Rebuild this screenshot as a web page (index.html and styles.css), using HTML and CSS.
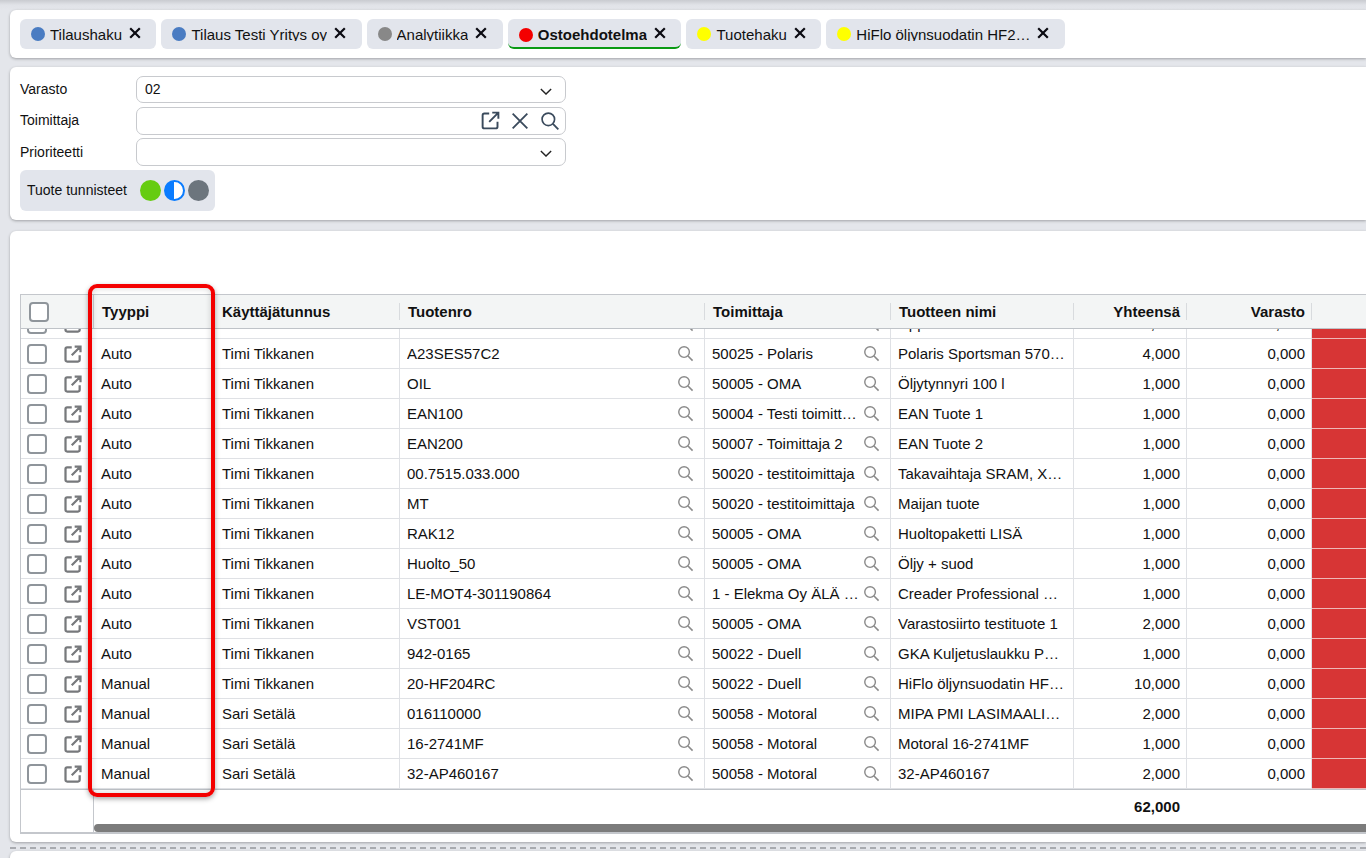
FILE: index.html
```html
<!DOCTYPE html>
<html lang="fi">
<head>
<meta charset="utf-8">
<title>Ostoehdotelma</title>
<link rel="stylesheet" href="styles.css">
</head>
<body>
<svg class="defs" width="0" height="0" aria-hidden="true">
  <symbol id="i-open" viewBox="0 0 24 24"><path d="M10.5 4H5a2 2 0 0 0-2 2v13a2 2 0 0 0 2 2h13a2 2 0 0 0 2-2v-5.5M10.5 13.5 21 3M14 3h7v7" fill="none" stroke="currentColor"/></symbol>
  <symbol id="i-search" viewBox="0 0 24 24"><circle cx="10" cy="10" r="7.5" fill="none" stroke="currentColor" stroke-width="2"/><path d="M15.5 15.5 22 22" fill="none" stroke="currentColor" stroke-width="2.2"/></symbol>
  <symbol id="i-x" viewBox="0 0 24 24"><path d="M4 4 20 20M20 4 4 20" fill="none" stroke="currentColor" stroke-width="2"/></symbol>
  <symbol id="i-close" viewBox="0 0 12 12"><path d="M1.2 1.2 10.8 10.8M10.8 1.2 1.2 10.8" fill="none" stroke="currentColor" stroke-width="2.2"/></symbol>
  <symbol id="i-chev" viewBox="0 0 14 8"><path d="M1 1 7 7 13 1" fill="none" stroke="currentColor" stroke-width="1.6"/></symbol>
</svg>

<section class="panel tabs">
  <div class="tab"><span class="dot dot-blue"></span><span class="tab-text">Tilaushaku</span><svg class="tab-x"><use href="#i-close"/></svg></div>
  <div class="tab"><span class="dot dot-blue"></span><span class="tab-text">Tilaus Testi Yritys oy</span><svg class="tab-x"><use href="#i-close"/></svg></div>
  <div class="tab"><span class="dot dot-gray"></span><span class="tab-text">Analytiikka</span><svg class="tab-x"><use href="#i-close"/></svg></div>
  <div class="tab tab-active"><span class="dot dot-red"></span><span class="tab-text">Ostoehdotelma</span><svg class="tab-x"><use href="#i-close"/></svg></div>
  <div class="tab"><span class="dot dot-yellow"></span><span class="tab-text">Tuotehaku</span><svg class="tab-x"><use href="#i-close"/></svg></div>
  <div class="tab"><span class="dot dot-yellow"></span><span class="tab-text tab-text-long">HiFlo öljynsuodatin HF2…</span><svg class="tab-x"><use href="#i-close"/></svg></div>
</section>

<section class="panel filters">
  <div class="form">
    <label class="lbl lbl-1">Varasto</label>
    <div class="field field-1"><span>02</span><svg class="chev"><use href="#i-chev"/></svg></div>
    <label class="lbl lbl-2">Toimittaja</label>
    <div class="field field-2"><svg class="fi fi-open"><use href="#i-open"/></svg><svg class="fi fi-x"><use href="#i-x"/></svg><svg class="fi fi-search"><use href="#i-search"/></svg></div>
    <label class="lbl lbl-3">Prioriteetti</label>
    <div class="field field-3"><svg class="chev"><use href="#i-chev"/></svg></div>
  </div>
  <div class="tags">
    <span class="tags-label">Tuote tunnisteet</span>
    <span class="tag tag-green"></span><span class="tag tag-half"></span><span class="tag tag-gray"></span>
  </div>
</section>

<section class="panel grid-panel">
  <div class="table">
    <div class="row head">
      <div class="c-sel"><span class="cb cb-head"></span></div>
      <div class="hc hc-first">Tyyppi</div>
      <div class="hc">Käyttäjätunnus</div>
      <div class="hc">Tuotenro</div>
      <div class="hc">Toimittaja</div>
      <div class="hc">Tuotteen nimi</div>
      <div class="hc num">Yhteensä</div>
      <div class="hc num">Varasto</div>
      <div></div>
    </div>
    <div class="rows">
      <div class="rows-inner">
        <div class="row"><div class="c-sel"><span class="cb"></span><svg class="open"><use href="#i-open"/></svg></div><div class="c c-plain">Auto</div><div class="c c-user">Timi Tikkanen</div><div class="c c-s"><span class="t">HUOLTO</span><svg class="s"><use href="#i-search"/></svg></div><div class="c c-s"><span class="t">50005 - OMA</span><svg class="s"><use href="#i-search"/></svg></div><div class="c c-n"><span class="t">Uppo</span></div><div class="c num">1,000</div><div class="c num">0,000</div><div class="red"></div></div>
        <div class="row"><div class="c-sel"><span class="cb"></span><svg class="open"><use href="#i-open"/></svg></div><div class="c c-plain">Auto</div><div class="c c-user">Timi Tikkanen</div><div class="c c-s"><span class="t">A23SES57C2</span><svg class="s"><use href="#i-search"/></svg></div><div class="c c-s"><span class="t">50025 - Polaris</span><svg class="s"><use href="#i-search"/></svg></div><div class="c c-n"><span class="t">Polaris Sportsman 570…</span></div><div class="c num">4,000</div><div class="c num">0,000</div><div class="red"></div></div>
        <div class="row"><div class="c-sel"><span class="cb"></span><svg class="open"><use href="#i-open"/></svg></div><div class="c c-plain">Auto</div><div class="c c-user">Timi Tikkanen</div><div class="c c-s"><span class="t">OIL</span><svg class="s"><use href="#i-search"/></svg></div><div class="c c-s"><span class="t">50005 - OMA</span><svg class="s"><use href="#i-search"/></svg></div><div class="c c-n"><span class="t">Öljytynnyri 100 l</span></div><div class="c num">1,000</div><div class="c num">0,000</div><div class="red"></div></div>
        <div class="row"><div class="c-sel"><span class="cb"></span><svg class="open"><use href="#i-open"/></svg></div><div class="c c-plain">Auto</div><div class="c c-user">Timi Tikkanen</div><div class="c c-s"><span class="t">EAN100</span><svg class="s"><use href="#i-search"/></svg></div><div class="c c-s"><span class="t">50004 - Testi toimitt…</span><svg class="s"><use href="#i-search"/></svg></div><div class="c c-n"><span class="t">EAN Tuote 1</span></div><div class="c num">1,000</div><div class="c num">0,000</div><div class="red"></div></div>
        <div class="row"><div class="c-sel"><span class="cb"></span><svg class="open"><use href="#i-open"/></svg></div><div class="c c-plain">Auto</div><div class="c c-user">Timi Tikkanen</div><div class="c c-s"><span class="t">EAN200</span><svg class="s"><use href="#i-search"/></svg></div><div class="c c-s"><span class="t">50007 - Toimittaja 2</span><svg class="s"><use href="#i-search"/></svg></div><div class="c c-n"><span class="t">EAN Tuote 2</span></div><div class="c num">1,000</div><div class="c num">0,000</div><div class="red"></div></div>
        <div class="row"><div class="c-sel"><span class="cb"></span><svg class="open"><use href="#i-open"/></svg></div><div class="c c-plain">Auto</div><div class="c c-user">Timi Tikkanen</div><div class="c c-s"><span class="t">00.7515.033.000</span><svg class="s"><use href="#i-search"/></svg></div><div class="c c-s"><span class="t">50020 - testitoimittaja</span><svg class="s"><use href="#i-search"/></svg></div><div class="c c-n"><span class="t">Takavaihtaja SRAM, X…</span></div><div class="c num">1,000</div><div class="c num">0,000</div><div class="red"></div></div>
        <div class="row"><div class="c-sel"><span class="cb"></span><svg class="open"><use href="#i-open"/></svg></div><div class="c c-plain">Auto</div><div class="c c-user">Timi Tikkanen</div><div class="c c-s"><span class="t">MT</span><svg class="s"><use href="#i-search"/></svg></div><div class="c c-s"><span class="t">50020 - testitoimittaja</span><svg class="s"><use href="#i-search"/></svg></div><div class="c c-n"><span class="t">Maijan tuote</span></div><div class="c num">1,000</div><div class="c num">0,000</div><div class="red"></div></div>
        <div class="row"><div class="c-sel"><span class="cb"></span><svg class="open"><use href="#i-open"/></svg></div><div class="c c-plain">Auto</div><div class="c c-user">Timi Tikkanen</div><div class="c c-s"><span class="t">RAK12</span><svg class="s"><use href="#i-search"/></svg></div><div class="c c-s"><span class="t">50005 - OMA</span><svg class="s"><use href="#i-search"/></svg></div><div class="c c-n"><span class="t">Huoltopaketti LISÄ</span></div><div class="c num">1,000</div><div class="c num">0,000</div><div class="red"></div></div>
        <div class="row"><div class="c-sel"><span class="cb"></span><svg class="open"><use href="#i-open"/></svg></div><div class="c c-plain">Auto</div><div class="c c-user">Timi Tikkanen</div><div class="c c-s"><span class="t">Huolto_50</span><svg class="s"><use href="#i-search"/></svg></div><div class="c c-s"><span class="t">50005 - OMA</span><svg class="s"><use href="#i-search"/></svg></div><div class="c c-n"><span class="t">Öljy + suod</span></div><div class="c num">1,000</div><div class="c num">0,000</div><div class="red"></div></div>
        <div class="row"><div class="c-sel"><span class="cb"></span><svg class="open"><use href="#i-open"/></svg></div><div class="c c-plain">Auto</div><div class="c c-user">Timi Tikkanen</div><div class="c c-s"><span class="t">LE-MOT4-301190864</span><svg class="s"><use href="#i-search"/></svg></div><div class="c c-s"><span class="t">1 - Elekma Oy ÄLÄ …</span><svg class="s"><use href="#i-search"/></svg></div><div class="c c-n"><span class="t">Creader Professional …</span></div><div class="c num">1,000</div><div class="c num">0,000</div><div class="red"></div></div>
        <div class="row"><div class="c-sel"><span class="cb"></span><svg class="open"><use href="#i-open"/></svg></div><div class="c c-plain">Auto</div><div class="c c-user">Timi Tikkanen</div><div class="c c-s"><span class="t">VST001</span><svg class="s"><use href="#i-search"/></svg></div><div class="c c-s"><span class="t">50005 - OMA</span><svg class="s"><use href="#i-search"/></svg></div><div class="c c-n"><span class="t">Varastosiirto testituote 1</span></div><div class="c num">2,000</div><div class="c num">0,000</div><div class="red"></div></div>
        <div class="row"><div class="c-sel"><span class="cb"></span><svg class="open"><use href="#i-open"/></svg></div><div class="c c-plain">Auto</div><div class="c c-user">Timi Tikkanen</div><div class="c c-s"><span class="t">942-0165</span><svg class="s"><use href="#i-search"/></svg></div><div class="c c-s"><span class="t">50022 - Duell</span><svg class="s"><use href="#i-search"/></svg></div><div class="c c-n"><span class="t">GKA Kuljetuslaukku P…</span></div><div class="c num">1,000</div><div class="c num">0,000</div><div class="red"></div></div>
        <div class="row"><div class="c-sel"><span class="cb"></span><svg class="open"><use href="#i-open"/></svg></div><div class="c c-plain">Manual</div><div class="c c-user">Timi Tikkanen</div><div class="c c-s"><span class="t">20-HF204RC</span><svg class="s"><use href="#i-search"/></svg></div><div class="c c-s"><span class="t">50022 - Duell</span><svg class="s"><use href="#i-search"/></svg></div><div class="c c-n"><span class="t">HiFlo öljynsuodatin HF…</span></div><div class="c num">10,000</div><div class="c num">0,000</div><div class="red"></div></div>
        <div class="row"><div class="c-sel"><span class="cb"></span><svg class="open"><use href="#i-open"/></svg></div><div class="c c-plain">Manual</div><div class="c c-user">Sari Setälä</div><div class="c c-s"><span class="t">016110000</span><svg class="s"><use href="#i-search"/></svg></div><div class="c c-s"><span class="t">50058 - Motoral</span><svg class="s"><use href="#i-search"/></svg></div><div class="c c-n"><span class="t">MIPA PMI LASIMAALI…</span></div><div class="c num">2,000</div><div class="c num">0,000</div><div class="red"></div></div>
        <div class="row"><div class="c-sel"><span class="cb"></span><svg class="open"><use href="#i-open"/></svg></div><div class="c c-plain">Manual</div><div class="c c-user">Sari Setälä</div><div class="c c-s"><span class="t">16-2741MF</span><svg class="s"><use href="#i-search"/></svg></div><div class="c c-s"><span class="t">50058 - Motoral</span><svg class="s"><use href="#i-search"/></svg></div><div class="c c-n"><span class="t">Motoral 16-2741MF</span></div><div class="c num">1,000</div><div class="c num">0,000</div><div class="red"></div></div>
        <div class="row"><div class="c-sel"><span class="cb"></span><svg class="open"><use href="#i-open"/></svg></div><div class="c c-plain">Manual</div><div class="c c-user">Sari Setälä</div><div class="c c-s"><span class="t">32-AP460167</span><svg class="s"><use href="#i-search"/></svg></div><div class="c c-s"><span class="t">50058 - Motoral</span><svg class="s"><use href="#i-search"/></svg></div><div class="c c-n"><span class="t">32-AP460167</span></div><div class="c num">2,000</div><div class="c num">0,000</div><div class="red"></div></div>
      </div>
    </div>
    <div class="foot">
      <div class="foot-left"></div>
      <div class="foot-main">
        <div class="totals"><div class="total">62,000</div></div>
        <div class="scrollbar"></div>
      </div>
    </div>
  </div>
  <div class="highlight"></div>
</section>

<div class="divider"></div>
<section class="panel next"></section>
</body>
</html>
```

FILE: styles.css
```css
* { box-sizing: border-box; }
html, body { margin: 0; height: 858px; overflow: hidden; }
body {
  background: linear-gradient(#c9cbd0 0, #e1e3e8 5px, #e4e6eb 10px);
  font-family: "Liberation Sans", Arial, sans-serif;
  font-size: 14px;
  color: #111;
  padding: 10px 0 0 10px;
}
.defs { position: absolute; }

.panel {
  background: #fff;
  border-radius: 6px 0 0 6px;
  box-shadow: 0 1px 3px rgba(0, 0, 0, .3);
}

/* tabs */
.tabs { height: 48px; padding: 9px 10px; display: flex; gap: 5px; margin-bottom: 9px; font-size: 15px; }
.tab {
  height: 30px;
  background: #e2e5ec;
  border-radius: 6px;
  display: flex;
  align-items: center;
  padding: 0 15.5px 0 11px;
  flex: none;
}
.tab-active { border-bottom: 2px solid #0a9a14; font-weight: 700; }
.dot { width: 14px; height: 14px; border-radius: 50%; margin-right: 5px; flex: none; }
.tab-active .dot { position: relative; top: 2px; }
.dot-blue { background: #4a7cc2; }
.dot-gray { background: #888; }
.dot-red { background: #f40000; }
.dot-yellow { background: #ffff00; }
.tab-text {
  height: 14px;
  line-height: 16px;
  overflow: hidden;
  white-space: nowrap;
}
.tab-active .tab-text { margin-top: 2px; }
.tab-text-long { width: 174px; }
.tab-x { width: 12px; height: 12px; margin-left: 7px; color: #0b0b12; flex: none; position: relative; top: -1px; }
.tab-active .tab-x { top: 0; }

/* filters */
.filters { height: 153px; padding: 9px 10px; margin-bottom: 11px; }
.form {
  display: grid;
  grid-template-columns: 116px 430px;
  grid-template-rows: 27px 28px 28px;
  row-gap: 3.5px;
  align-items: center;
}
.lbl-1 { margin-bottom: 2px; }
.lbl-2 { margin-bottom: 2px; }
.field {
  height: 100%;
  border: 1px solid #c8cace;
  border-radius: 7px;
  display: flex;
  align-items: center;
  justify-content: flex-end;
  padding: 0 4px 0 8px;
}
.field span { margin-right: auto; margin-bottom: 2px; }
.chev { width: 12px; height: 7px; margin-right: 9px; margin-top: 3px; color: #222; }
.fi { color: #3a4a5c; }
.fi-open { width: 21px; height: 21px; margin-right: 8px; stroke-width: 2.2; }
.fi-x { width: 22px; height: 22px; margin-right: 9px; }
.fi-search { width: 20px; height: 20px; margin-right: 1px; }

.tags {
  margin-top: 4px;
  width: 195px;
  height: 41px;
  background: #e2e5ec;
  border-radius: 6px;
  display: flex;
  align-items: center;
  padding-left: 7px;
  gap: 3px;
}
.tags-label { margin-right: 10px; margin-bottom: 2px; }
.tag { width: 21px; height: 21px; border-radius: 50%; flex: none; }
.tag-green { background: #66cc11; }
.tag-half { border: 2px solid #0a7cff; background: linear-gradient(90deg, #0a7cff 50%, #fff 50%); }
.tag-gray { background: #6c757d; }

/* grid */
.grid-panel { height: 611px; padding: 63px 0 0 10px; position: relative; overflow: hidden; font-size: 15px; }
.table { border: 1px solid #c4c7cc; border-right: 0; height: 540px; display: flex; flex-direction: column; }
.row {
  display: grid;
  grid-template-columns: 73px 120px 186px 305px 186px 183px 113px 125px 60px;
  height: 30px;
  align-items: stretch;
}
.head { height: 34px; background: #f3f5f5; border-bottom: 1px solid #bfc3c8; flex: none; }
.c-sel { border-bottom: 1px solid #dfe1e5; display: flex; align-items: center; padding-left: 6px; gap: 16px; }
.head .c-sel { border-bottom: 0; padding-left: 8px; border-right: 1px solid #c8cbcf; }
.cb { width: 20px; height: 20px; border: 2px solid #8f959b; border-radius: 4px; background: #fff; flex: none; }
.open { width: 20px; height: 20px; color: #77797c; flex: none; stroke-width: 2.7; }
.hc {
  display: flex;
  align-items: center;
  padding: 0 7px 0 8px;
  font-weight: 700;
  position: relative;
}
.hc::after {
  content: "";
  position: absolute;
  right: 0;
  top: 8px;
  bottom: 8px;
  width: 1px;
  background: #d8dbde;
}
.hc.num { justify-content: flex-end; }
.rows { height: 460px; overflow: hidden; flex: none; }
.rows-inner { margin-top: -20px; }
.c {
  display: flex;
  align-items: center;
  padding: 0 6px 0 7px;
  border-right: 1px solid #dfe1e5;
  border-bottom: 1px solid #dfe1e5;
  min-width: 0;
  white-space: nowrap;
}
.c-plain { border-right-color: transparent; }
.c-user { padding-left: 8px; }
.c-s { padding-right: 10px; }
.c-n { padding-right: 6px; }
.t { overflow: hidden; flex: 1; min-width: 0; }
.s { width: 17px; height: 17px; color: #8a8a8a; flex: none; margin-left: 5px; }
.num { justify-content: flex-end; }
.c.num { padding-right: 6px; }
.red { background: #d73535; border-bottom: 1px solid #eeb7b7; }

.foot { display: flex; flex: 1; border-top: 1px solid #bfc3c8; }
.foot-left { width: 73px; border-right: 1px solid #c4c7cc; flex: none; border-bottom: 1px solid #c4c7cc; }
.foot-main { flex: 1; display: flex; flex-direction: column; min-width: 0; border-bottom: 1px solid #c4c7cc; }
.totals { flex: 1; display: flex; align-items: center; }
.total { font-weight: 700; margin-left: 987px; margin-bottom: 2px; width: 99px; text-align: right; }
.scrollbar { height: 8px; background: #7c7c7c; border-radius: 4px 0 0 4px; flex: none; }

.highlight {
  position: absolute;
  left: 78px;
  top: 53px;
  width: 127px;
  height: 513px;
  border: 4px solid #f40000;
  border-radius: 9px;
  box-shadow: 0 2px 5px rgba(0, 0, 0, .35), inset 0 0 6px rgba(0, 0, 0, .18);
}

.divider { margin-top: 5px; border-top: 2px dashed #a9abb0; height: 2px; }
.next { height: 30px; margin-top: 2px; }
```
